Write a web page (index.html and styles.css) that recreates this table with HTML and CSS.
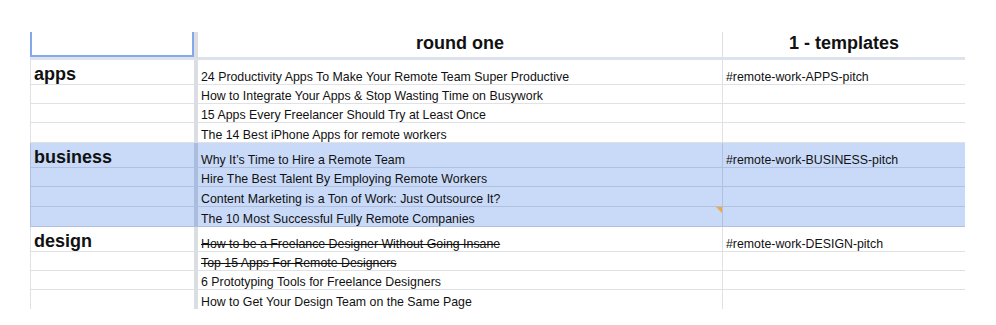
FILE: index.html
```html
<!DOCTYPE html>
<html lang="en">
<head>
<meta charset="utf-8">
<title>Sheet</title>
<link rel="stylesheet" href="styles.css">
</head>
<body>
<div class="sheet">
  <div class="grid">
    <div class="cell c1 hdr sel"></div>
    <div class="cell c2 hdr">round one</div>
    <div class="cell c3 hdr">1 - templates</div>

    <div class="cell c1 r1 label">apps</div>
    <div class="cell c2 r1">24 Productivity Apps To Make Your Remote Team Super Productive</div>
    <div class="cell c3 r1">#remote-work-APPS-pitch</div>
    <div class="cell c1 r2"></div>
    <div class="cell c2 r2">How to Integrate Your Apps &amp; Stop Wasting Time on Busywork</div>
    <div class="cell c3 r2"></div>
    <div class="cell c1 r3"></div>
    <div class="cell c2 r3">15 Apps Every Freelancer Should Try at Least Once</div>
    <div class="cell c3 r3"></div>
    <div class="cell c1 r4"></div>
    <div class="cell c2 r4">The 14 Best iPhone Apps for remote workers</div>
    <div class="cell c3 r4"></div>

    <div class="cell c1 r1 label hl">business</div>
    <div class="cell c2 r1 hl">Why It’s Time to Hire a Remote Team</div>
    <div class="cell c3 r1 hl">#remote-work-BUSINESS-pitch</div>
    <div class="cell c1 r2 hl"></div>
    <div class="cell c2 r2 hl">Hire The Best Talent By Employing Remote Workers</div>
    <div class="cell c3 r2 hl"></div>
    <div class="cell c1 r3b hl"></div>
    <div class="cell c2 r3b hl">Content Marketing is a Ton of Work: Just Outsource It?</div>
    <div class="cell c3 r3b hl"></div>
    <div class="cell c1 r4 hl"></div>
    <div class="cell c2 r4 hl note">The 10 Most Successful Fully Remote Companies</div>
    <div class="cell c3 r4 hl"></div>

    <div class="cell c1 r1 label">design</div>
    <div class="cell c2 r1 done">How to be a Freelance Designer Without Going Insane</div>
    <div class="cell c3 r1">#remote-work-DESIGN-pitch</div>
    <div class="cell c1 r2"></div>
    <div class="cell c2 r2 done">Top 15 Apps For Remote Designers</div>
    <div class="cell c3 r2"></div>
    <div class="cell c1 r3"></div>
    <div class="cell c2 r3">6 Prototyping Tools for Freelance Designers</div>
    <div class="cell c3 r3"></div>
    <div class="cell c1 r5"></div>
    <div class="cell c2 r5">How to Get Your Design Team on the Same Page</div>
    <div class="cell c3 r5"></div>
  </div>
</div>
</body>
</html>
```

FILE: styles.css
```css
html, body {
  margin: 0;
  padding: 0;
  background: #ffffff;
}

body {
  font-family: "Liberation Sans", Arial, Helvetica, sans-serif;
  color: #111;
}

.sheet {
  margin-left: 30px;
  margin-top: 32px;
  width: 935px;
  height: 277px;
  overflow: hidden;
}

.grid {
  display: grid;
  grid-template-columns: 168px 525px 242px;
}

.cell {
  box-sizing: border-box;
  display: flex;
  align-items: flex-end;
  font-size: 12.35px;
  line-height: 14px;
  padding: 0 0 0 3px;
  white-space: nowrap;
  overflow: hidden;
  border-bottom: 1px solid rgba(0, 10, 40, 0.12);
  border-right: 1px solid rgba(0, 10, 40, 0.12);
  position: relative;
}

.c1 {
  border-left: 1px solid rgba(0, 10, 40, 0.12);
  border-right: 4px solid rgba(0, 20, 60, 0.14);
}

.hdr {
  height: 28px;
  border-bottom: 3px solid rgba(0, 30, 100, 0.13);
  justify-content: center;
  font-size: 18px;
  font-weight: bold;
  line-height: 21px;
  padding: 0 0 3px 0;
}

.sel {
  box-shadow: inset 2px 0 0 #84a8eb, inset -2px 0 0 #84a8eb, inset 0 -2px 0 #84a8eb;
  border-left: none;
}

.c3 {
  border-right: none;
}

.r1 { height: 25px; }
.r2 { height: 19px; }
.r3 { height: 19px; }
.r3b { height: 20px; }
.r4 { height: 20px; }
.r5 { height: 19px; border-bottom: none; }

.label {
  font-size: 18px;
  font-weight: bold;
  line-height: 20px;
  padding: 0 0 0 3px;
}

.hl {
  background: #c9daf8;
}

.done {
  text-decoration: line-through;
}

.note::after {
  content: "";
  position: absolute;
  top: 0;
  right: 0;
  border-top: 6px solid #f1a93b;
  border-left: 6px solid transparent;
}
```
